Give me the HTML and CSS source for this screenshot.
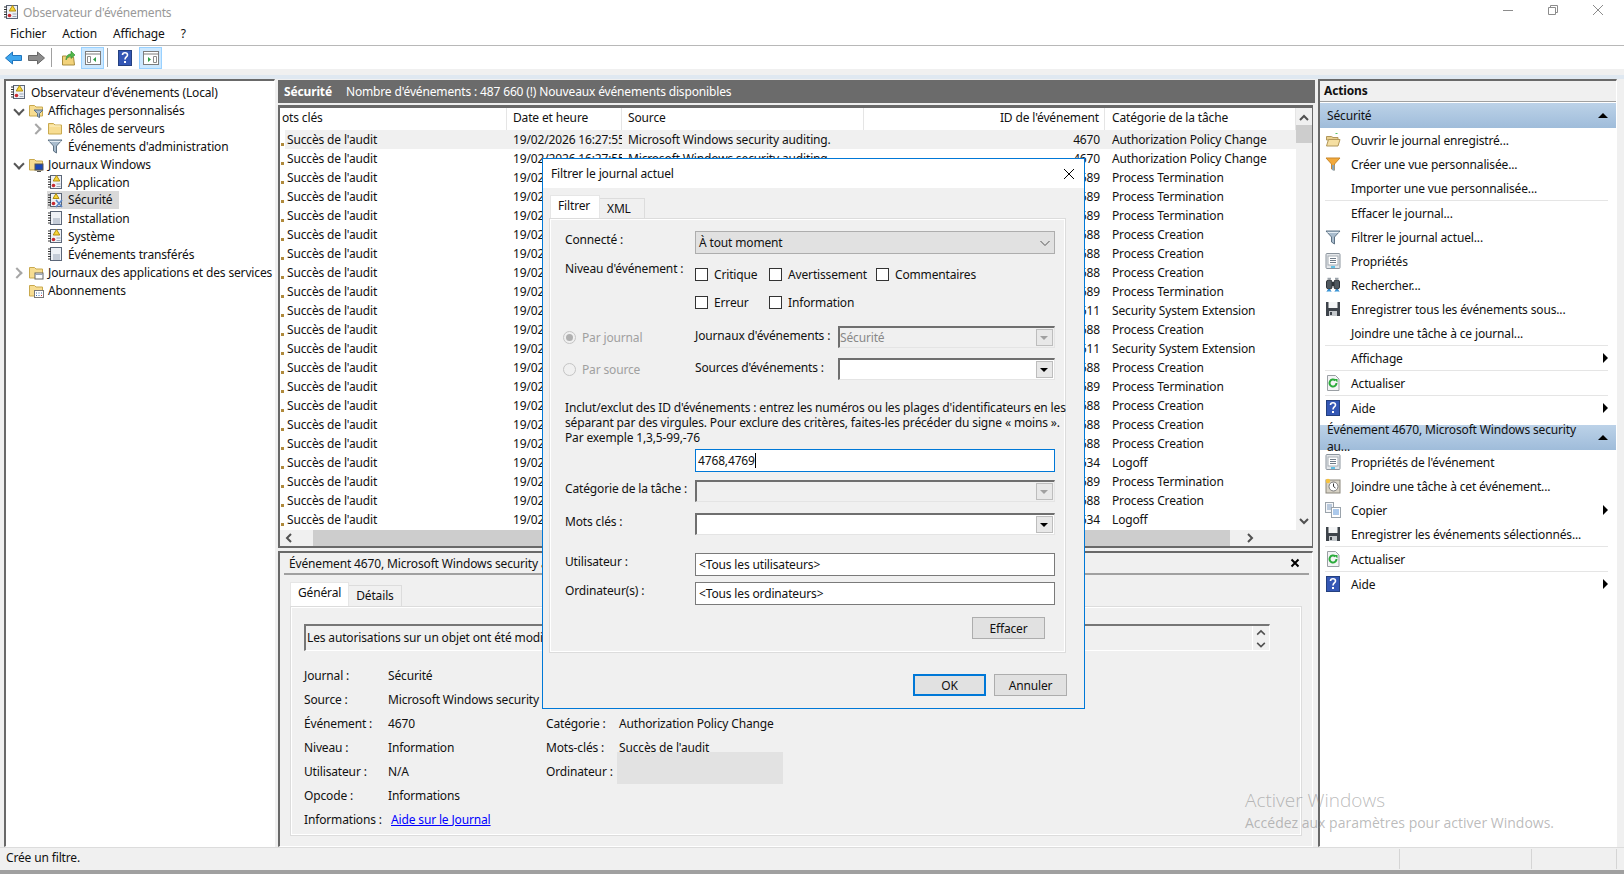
FILE: index.html
```html
<!DOCTYPE html>
<html lang="fr">
<head>
  <meta charset="UTF-8">
  <title>Observateur d'événements</title>
  <link rel="stylesheet" href="styles.css">
</head>
<body>

  <!-- Icon set -->
  <svg class="icon-defs" width="0" height="0">
    <defs>
      <symbol id="i-log" viewBox="0 0 16 16">
        <rect x="3.5" y="1.5" width="11" height="13" fill="#eef1f6" stroke="#5b6678"/>
        <path d="M1 3h3M1 5.5h3M1 8h3M1 10.500h3M1 13h3" stroke="#333"/>
        <path d="M6 9h7M6 11h7M6 13h7" stroke="#9aa6b8"/>
      </symbol>
      <symbol id="i-log-alert" viewBox="0 0 16 16">
        <rect x="3.500" y="1.500" width="11" height="13" fill="#eef1f6" stroke="#5b6678"/>
        <path d="M1 3h3M1 5.500h3M1 8h3M1 10.500h3M1 13h3" stroke="#333"/>
        <path d="M9.500 1.500l3.300 5.500h-6.600z" fill="#f8d636" stroke="#b08d10"/>
        <circle cx="6.500" cy="11.500" r="1.800" fill="#c72b32"/>
        <path d="M9.500 10h4M9.500 12.500h4" stroke="#9aa6b8"/>
      </symbol>
      <symbol id="i-log-key" viewBox="0 0 16 16">
        <rect x="3.500" y="1.500" width="11" height="13" fill="#eef1f6" stroke="#5b6678"/>
        <path d="M1 3h3M1 5.500h3M1 8h3M1 10.500h3M1 13h3" stroke="#333"/>
        <path d="M9 1.500l3 5h-6z" fill="#f8d636" stroke="#b08d10"/>
        <circle cx="6.500" cy="11.500" r="1.800" fill="#c72b32"/>
        <path d="M9 8l6 7M15 8l-6 7" stroke="#5a86c8" stroke-width="1.600"/>
      </symbol>
      <symbol id="i-folder" viewBox="0 0 16 16">
        <path d="M1.500 3.500h5l1.500 1.500h6.500v9h-13z" fill="#f7dd92" stroke="#c9a94e"/>
        <path d="M2.500 6h11" stroke="#fdf2c8"/>
      </symbol>
      <symbol id="i-funnel" viewBox="0 0 16 16">
        <path d="M1 2h14l-5.500 6v7l-3-2v-5z" fill="#a9bccd" stroke="#5e7284"/>
        <path d="M2.500 3.500h11" stroke="#e4edf4"/>
      </symbol>
      <symbol id="i-funnel-orange" viewBox="0 0 16 16">
        <path d="M1 2h14l-5.500 6v6l-3-1v-5z" fill="#f2a93b" stroke="#c9882c"/>
        <path d="M7 9v5l2.500 1v-6z" fill="#8aa4b8"/>
      </symbol>
      <symbol id="i-folder-filter" viewBox="0 0 16 16">
        <path d="M1.500 3.500h5l1.500 1.500h6.500v9h-13z" fill="#f7dd92" stroke="#c9a94e"/>
        <path d="M6 8h9l-3.500 3.500v4l-2-1v-3z" fill="#a9bccd" stroke="#5e7284"/>
      </symbol>
      <symbol id="i-folder-monitor" viewBox="0 0 16 16">
        <path d="M1.500 3.500h5l1.500 1.500h6.500v9h-13z" fill="#f7dd92" stroke="#c9a94e"/>
        <rect x="7" y="8" width="8" height="6" fill="#1b48b8" stroke="#555"/>
        <path d="M9 15.500h4" stroke="#555"/>
      </symbol>
      <symbol id="i-folder-doc" viewBox="0 0 16 16">
        <path d="M1.500 3.500h5l1.500 1.500h6.500v9h-13z" fill="#f7dd92" stroke="#c9a94e"/>
        <rect x="7" y="9" width="8" height="6" fill="#fff" stroke="#666"/>
        <path d="M7 10.500h8" stroke="#9aa6b8"/>
      </symbol>
      <symbol id="i-folder-sub" viewBox="0 0 16 16">
        <path d="M1.500 3.500h5l1.500 1.500h6.500v9h-13z" fill="#f7dd92" stroke="#c9a94e"/>
        <rect x="6.500" y="8.500" width="9" height="7" fill="#fff" stroke="#777"/>
        <path d="M8 11h1M10.500 11h1M13 11h1M8 13.500h1M10.500 13.500h1" stroke="#3a6fb0"/>
        <path d="M13 13.500h1" stroke="#c72b32"/>
      </symbol>
      <symbol id="i-help" viewBox="0 0 16 16">
        <rect x="1.500" y="0.500" width="13" height="15" fill="#3457b5" stroke="#24407f"/>
        <path d="M5.500 5c0-3 5-3 5 0 0 2-2.500 2-2.500 4.500" fill="none" stroke="#fff" stroke-width="1.600"/>
        <rect x="7" y="11" width="2" height="2" fill="#fff"/>
      </symbol>
      <symbol id="i-pane-left" viewBox="0 0 16 16">
        <rect x="0.500" y="1.500" width="15" height="13" fill="#fff" stroke="#7d7d7d"/>
        <path d="M1 4h14" stroke="#7d7d7d"/>
        <path d="M2.500 6.500h3v6h-3z" fill="none" stroke="#8a8a8a"/>
        <path d="M11 7v5l-3-2.500z" fill="#2f9e44"/>
      </symbol>
      <symbol id="i-pane-right" viewBox="0 0 16 16">
        <rect x="0.500" y="1.500" width="15" height="13" fill="#fff" stroke="#7d7d7d"/>
        <path d="M1 4h14" stroke="#7d7d7d"/>
        <path d="M10.500 6.500h3v6h-3z" fill="none" stroke="#8a8a8a"/>
        <path d="M5 7v5l3-2.500z" fill="#2f9e44"/>
      </symbol>
      <symbol id="i-open" viewBox="0 0 16 16">
        <path d="M1.500 4.500h5l1.500 1h5v2.500h-11.500z" fill="#e8cf8e" stroke="#b1975a"/>
        <path d="M1.500 14l2-6.500h11.500l-2 6.500z" fill="#f5dfa2" stroke="#b1975a"/>
        <path d="M10.500 1.500h2" stroke="#55c26a"/>
      </symbol>
      <symbol id="i-props" viewBox="0 0 16 16">
        <rect x="1" y="0.500" width="14" height="15" rx="1" fill="#e4e7ea" stroke="#8c959e"/>
        <rect x="3" y="3" width="10" height="9" fill="#fff" stroke="#a6adb4"/>
        <path d="M5 5.500h6M5 7.500h6M5 9.500h6" stroke="#6f7b88"/>
        <path d="M6 14h4" stroke="#35b5e5" stroke-width="1.500"/>
      </symbol>
      <symbol id="i-find" viewBox="0 0 16 16">
        <rect x="1.500" y="3" width="5.500" height="9" rx="2" fill="#50585f" stroke="#2d3238"/>
        <rect x="9" y="3" width="5.500" height="9" rx="2" fill="#50585f" stroke="#2d3238"/>
        <path d="M7 5h2v4h-2z" fill="#2d3238"/>
        <path d="M2.500 1.500h3.500M10 1.500h3.500" stroke="#9aa3ab" stroke-width="1.500"/>
        <path d="M2 14.500l2-2.500 2 2.500M10 14.500l2-2.500 2 2.500" fill="#3b9fe0" stroke="#2a7fc4"/>
      </symbol>
      <symbol id="i-save" viewBox="0 0 16 16">
        <path d="M1 1h14v14h-14z" fill="#3e444b"/>
        <rect x="3.500" y="1" width="9" height="6" fill="#f4f5f6"/>
        <rect x="4" y="10" width="8" height="5" fill="#c5c9cd"/>
        <rect x="5" y="11" width="2" height="3" fill="#3e444b"/>
      </symbol>
      <symbol id="i-refresh" viewBox="0 0 16 16">
        <path d="M2.500 0.500h8l3.500 3.500v11.500h-11.500z" fill="#f3f4f5" stroke="#9a9fa4"/>
        <path d="M11.500 8a3.500 3.500 0 1 1-1.200-2.600" fill="none" stroke="#2bab3c" stroke-width="2"/>
        <path d="M9 4h3.500v3.500z" fill="#2bab3c"/>
      </symbol>
      <symbol id="i-task" viewBox="0 0 16 16">
        <rect x="1" y="2" width="14" height="13" fill="#d8d3c6" stroke="#8b877c"/>
        <circle cx="8.500" cy="8.500" r="4.500" fill="#fff" stroke="#7b7b7b"/>
        <path d="M8.500 5.500v3l2 1.500" fill="none" stroke="#333"/>
        <circle cx="3" cy="3" r="2.200" fill="#f7c23c"/>
      </symbol>
      <symbol id="i-copy" viewBox="0 0 16 16">
        <rect x="0.500" y="0.500" width="8" height="10" fill="#f6f7f9" stroke="#9aa3ab"/>
        <path d="M2 3h5M2 5h5M2 7h5" stroke="#7f9cc0"/>
        <rect x="6.500" y="5.500" width="9" height="10" fill="#fff" stroke="#9aa3ab"/>
        <path d="M8 8h6M8 10h6M8 12h6" stroke="#5a94d8"/>
      </symbol>
    </defs>
  </svg>

  <div class="window">

    <div class="titlebar">
      <svg class="icon"><use href="#i-log-alert"/></svg>
      <span class="title-text">Observateur d'événements</span>
      <div class="window-buttons">
        <svg width="12" height="12" viewBox="0 0 12 12"><path d="M1 6.500h10" stroke="#8c8c8c"/></svg>
        <svg width="12" height="12" viewBox="0 0 12 12"><path d="M1.500 3.500h7v7h-7zM3.500 3.500v-2h7v7h-2" fill="none" stroke="#8c8c8c"/></svg>
        <svg width="12" height="12" viewBox="0 0 12 12"><path d="M1 1l10 10M11 1l-10 10" stroke="#8c8c8c"/></svg>
      </div>
    </div>

    <div class="menubar">
      <span>Fichier</span>
      <span>Action</span>
      <span>Affichage</span>
      <span>?</span>
    </div>

    <div class="toolbar">
      <svg class="tool-arrow" width="17" height="16" viewBox="0 0 17 16"><path d="M0.500 8l7-6v3.500h9v5h-9v3.500z" fill="#3ea6ee" stroke="#1f74bd"/></svg>
      <svg class="tool-arrow" width="17" height="16" viewBox="0 0 17 16"><path d="M16.500 8l-7-6v3.500h-9v5h9v3.500z" fill="#8d8d8d" stroke="#666"/></svg>
      <span class="tool-sep"></span>
      <svg class="tool-icon" width="16" height="16" viewBox="0 0 16 16"><path d="M1.500 6h4l1 1h6l1 8h-12z" fill="#f2d27a" stroke="#a88c3c"/><path d="M5 10c0-4 2-6 5-6v-3l4 4-4 3.500v-2.500c-2 0-3.500 1.500-5 4z" fill="#52b84a" stroke="#2f8a33" stroke-width=".6"/></svg>
      <span class="tool-toggle"><svg class="icon"><use href="#i-pane-left"/></svg></span>
      <span class="tool-sep tool-sep-tight"></span>
      <svg class="tool-icon"  width="16" height="16"><use href="#i-help"/></svg>
      <span class="tool-toggle tool-toggle-last"><svg class="icon"><use href="#i-pane-right"/></svg></span>
    </div>

    <div class="workspace">

      <!-- Console tree -->
      <div class="pane tree">
        <div class="tree-row"><span class="twisty"></span><svg class="icon"><use href="#i-log-alert"/></svg><span>Observateur d'événements (Local)</span></div>
        <div class="tree-row lvl1"><span class="twisty open"></span><svg class="icon"><use href="#i-folder-filter"/></svg><span>Affichages personnalisés</span></div>
        <div class="tree-row lvl2"><span class="twisty closed"></span><svg class="icon"><use href="#i-folder"/></svg><span>Rôles de serveurs</span></div>
        <div class="tree-row lvl2"><span class="twisty"></span><svg class="icon"><use href="#i-funnel"/></svg><span>Événements d'administration</span></div>
        <div class="tree-row lvl1"><span class="twisty open"></span><svg class="icon"><use href="#i-folder-monitor"/></svg><span>Journaux Windows</span></div>
        <div class="tree-row lvl2"><span class="twisty"></span><svg class="icon"><use href="#i-log-alert"/></svg><span>Application</span></div>
        <div class="tree-row lvl2 selected"><span class="twisty"></span><svg class="icon"><use href="#i-log-key"/></svg><span>Sécurité</span></div>
        <div class="tree-row lvl2"><span class="twisty"></span><svg class="icon"><use href="#i-log"/></svg><span>Installation</span></div>
        <div class="tree-row lvl2"><span class="twisty"></span><svg class="icon"><use href="#i-log-alert"/></svg><span>Système</span></div>
        <div class="tree-row lvl2"><span class="twisty"></span><svg class="icon"><use href="#i-log"/></svg><span>Événements transférés</span></div>
        <div class="tree-row lvl1"><span class="twisty closed"></span><svg class="icon"><use href="#i-folder-doc"/></svg><span>Journaux des applications et des services</span></div>
        <div class="tree-row lvl1"><span class="twisty"></span><svg class="icon"><use href="#i-folder-sub"/></svg><span>Abonnements</span></div>
      </div>

      <!-- Center -->
      <div class="center">
        <div class="center-head"><b>Sécurité</b><span>Nombre d'événements : 487 660 (!) Nouveaux événements disponibles</span></div>

        <div class="pane list-pane">
          <div class="list-main">
            <div class="list-cols">
              <div class="list-head">
                <div class="c-key"><span class="clip-start">ots clés</span></div>
                <div class="c-date">Date et heure</div>
                <div class="c-src">Source</div>
                <div class="c-id">ID de l'événement</div>
                <div class="c-cat">Catégorie de la tâche</div>
              </div>
              <div class="list-rows">
                <div class="row current"><div class="c-key">Succès de l'audit</div><div class="c-date">19/02/2026 16:27:55</div><div class="c-src">Microsoft Windows security auditing.</div><div class="c-id">4670</div><div class="c-cat">Authorization Policy Change</div></div>
                <div class="row"><div class="c-key">Succès de l'audit</div><div class="c-date">19/02/2026 16:27:55</div><div class="c-src">Microsoft Windows security auditing.</div><div class="c-id">4670</div><div class="c-cat">Authorization Policy Change</div></div>
                <div class="row"><div class="c-key">Succès de l'audit</div><div class="c-date">19/02/2026 16:27:55</div><div class="c-src">Microsoft Windows security auditing.</div><div class="c-id">4689</div><div class="c-cat">Process Termination</div></div>
                <div class="row"><div class="c-key">Succès de l'audit</div><div class="c-date">19/02/2026 16:27:55</div><div class="c-src">Microsoft Windows security auditing.</div><div class="c-id">4689</div><div class="c-cat">Process Termination</div></div>
                <div class="row"><div class="c-key">Succès de l'audit</div><div class="c-date">19/02/2026 16:27:55</div><div class="c-src">Microsoft Windows security auditing.</div><div class="c-id">4689</div><div class="c-cat">Process Termination</div></div>
                <div class="row"><div class="c-key">Succès de l'audit</div><div class="c-date">19/02/2026 16:27:55</div><div class="c-src">Microsoft Windows security auditing.</div><div class="c-id">4688</div><div class="c-cat">Process Creation</div></div>
                <div class="row"><div class="c-key">Succès de l'audit</div><div class="c-date">19/02/2026 16:27:55</div><div class="c-src">Microsoft Windows security auditing.</div><div class="c-id">4688</div><div class="c-cat">Process Creation</div></div>
                <div class="row"><div class="c-key">Succès de l'audit</div><div class="c-date">19/02/2026 16:27:55</div><div class="c-src">Microsoft Windows security auditing.</div><div class="c-id">4688</div><div class="c-cat">Process Creation</div></div>
                <div class="row"><div class="c-key">Succès de l'audit</div><div class="c-date">19/02/2026 16:27:55</div><div class="c-src">Microsoft Windows security auditing.</div><div class="c-id">4689</div><div class="c-cat">Process Termination</div></div>
                <div class="row"><div class="c-key">Succès de l'audit</div><div class="c-date">19/02/2026 16:27:55</div><div class="c-src">Microsoft Windows security auditing.</div><div class="c-id">4611</div><div class="c-cat">Security System Extension</div></div>
                <div class="row"><div class="c-key">Succès de l'audit</div><div class="c-date">19/02/2026 16:27:55</div><div class="c-src">Microsoft Windows security auditing.</div><div class="c-id">4688</div><div class="c-cat">Process Creation</div></div>
                <div class="row"><div class="c-key">Succès de l'audit</div><div class="c-date">19/02/2026 16:27:55</div><div class="c-src">Microsoft Windows security auditing.</div><div class="c-id">4611</div><div class="c-cat">Security System Extension</div></div>
                <div class="row"><div class="c-key">Succès de l'audit</div><div class="c-date">19/02/2026 16:27:55</div><div class="c-src">Microsoft Windows security auditing.</div><div class="c-id">4688</div><div class="c-cat">Process Creation</div></div>
                <div class="row"><div class="c-key">Succès de l'audit</div><div class="c-date">19/02/2026 16:27:55</div><div class="c-src">Microsoft Windows security auditing.</div><div class="c-id">4689</div><div class="c-cat">Process Termination</div></div>
                <div class="row"><div class="c-key">Succès de l'audit</div><div class="c-date">19/02/2026 16:27:55</div><div class="c-src">Microsoft Windows security auditing.</div><div class="c-id">4688</div><div class="c-cat">Process Creation</div></div>
                <div class="row"><div class="c-key">Succès de l'audit</div><div class="c-date">19/02/2026 16:27:55</div><div class="c-src">Microsoft Windows security auditing.</div><div class="c-id">4688</div><div class="c-cat">Process Creation</div></div>
                <div class="row"><div class="c-key">Succès de l'audit</div><div class="c-date">19/02/2026 16:27:55</div><div class="c-src">Microsoft Windows security auditing.</div><div class="c-id">4688</div><div class="c-cat">Process Creation</div></div>
                <div class="row"><div class="c-key">Succès de l'audit</div><div class="c-date">19/02/2026 16:27:55</div><div class="c-src">Microsoft Windows security auditing.</div><div class="c-id">4634</div><div class="c-cat">Logoff</div></div>
                <div class="row"><div class="c-key">Succès de l'audit</div><div class="c-date">19/02/2026 16:27:55</div><div class="c-src">Microsoft Windows security auditing.</div><div class="c-id">4689</div><div class="c-cat">Process Termination</div></div>
                <div class="row"><div class="c-key">Succès de l'audit</div><div class="c-date">19/02/2026 16:27:55</div><div class="c-src">Microsoft Windows security auditing.</div><div class="c-id">4688</div><div class="c-cat">Process Creation</div></div>
                <div class="row"><div class="c-key">Succès de l'audit</div><div class="c-date">19/02/2026 16:27:55</div><div class="c-src">Microsoft Windows security auditing.</div><div class="c-id">4634</div><div class="c-cat">Logoff</div></div>
              </div>
            </div>
            <div class="vscroll">
              <svg width="16" height="16" viewBox="0 0 16 16"><path d="M4 10l4-4 4 4" fill="none" stroke="#505050" stroke-width="2"/></svg>
              <span class="vthumb"></span>
              <svg width="16" height="16" viewBox="0 0 16 16"><path d="M4 6l4 4 4-4" fill="none" stroke="#505050" stroke-width="2"/></svg>
            </div>
          </div>
          <div class="hscroll">
            <svg class="harrow" width="16" height="16" viewBox="0 0 16 16"><path d="M10 4l-4 4 4 4" fill="none" stroke="#505050" stroke-width="2"/></svg>
            <span class="hthumb"></span>
            <svg class="harrow-end" width="16" height="16" viewBox="0 0 16 16"><path d="M6 4l4 4-4 4" fill="none" stroke="#505050" stroke-width="2"/></svg>
          </div>
        </div>

        <!-- Event preview -->
        <div class="pane detail-pane">
          <div class="detail-head">
            <span>Événement 4670, Microsoft Windows security auditing.</span>
            <svg width="10" height="10" viewBox="0 0 10 10"><path d="M1.500 1.500l7 7M8.500 1.500l-7 7" stroke="#000" stroke-width="2"/></svg>
          </div>
          <div class="tabs detail-tabs">
            <span class="tab active">Général</span>
            <span class="tab">Détails</span>
          </div>
          <div class="tab-panel detail-panel">
            <div class="message">
              <span>Les autorisations sur un objet ont été modifiées.</span>
              <div class="message-scroll">
                <svg width="12" height="12" viewBox="0 0 12 12"><path d="M2 8l4-4 4 4" fill="none" stroke="#505050" stroke-width="1.600"/></svg>
                <svg width="12" height="12" viewBox="0 0 12 12"><path d="M2 4l4 4 4-4" fill="none" stroke="#505050" stroke-width="1.600"/></svg>
              </div>
            </div>
            <div class="fields">
              <span>Journal :</span><span>Sécurité</span><span></span><span></span>
              <span>Source :</span><span>Microsoft Windows security auditing.</span><span></span><span></span>
              <span>Événement :</span><span>4670</span><span>Catégorie :</span><span>Authorization Policy Change</span>
              <span>Niveau :</span><span>Information</span><span>Mots-clés :</span><span>Succès de l'audit</span>
              <span>Utilisateur :</span><span>N/A</span><span>Ordinateur :</span><span></span>
              <span>Opcode :</span><span>Informations</span><span></span><span></span>
              <span>Informations :</span><a class="help-link" href="#">Aide sur le Journal</a><span></span><span></span>
            </div>
            <div class="redacted"></div>
          </div>
        </div>
      </div>

      <!-- Actions -->
      <div class="pane actions">
        <div class="actions-head">Actions</div>
        <div class="section-head"><span>Sécurité</span><i class="tri-up"></i></div>
        <div class="action"><svg class="icon"><use href="#i-open"/></svg><span>Ouvrir le journal enregistré...</span></div>
        <div class="action"><svg class="icon"><use href="#i-funnel-orange"/></svg><span>Créer une vue personnalisée...</span></div>
        <div class="action"><span class="icon"></span><span>Importer une vue personnalisée...</span></div>
        <div class="action-sep"></div>
        <div class="action"><span class="icon"></span><span>Effacer le journal...</span></div>
        <div class="action"><svg class="icon"><use href="#i-funnel"/></svg><span>Filtrer le journal actuel...</span></div>
        <div class="action"><svg class="icon"><use href="#i-props"/></svg><span>Propriétés</span></div>
        <div class="action"><svg class="icon"><use href="#i-find"/></svg><span>Rechercher...</span></div>
        <div class="action"><svg class="icon"><use href="#i-save"/></svg><span>Enregistrer tous les événements sous...</span></div>
        <div class="action"><span class="icon"></span><span>Joindre une tâche à ce journal...</span></div>
        <div class="action-sep"></div>
        <div class="action"><span class="icon"></span><span>Affichage</span><i class="tri-right"></i></div>
        <div class="action-sep"></div>
        <div class="action"><svg class="icon"><use href="#i-refresh"/></svg><span>Actualiser</span></div>
        <div class="action-sep"></div>
        <div class="action"><svg class="icon"><use href="#i-help"/></svg><span>Aide</span><i class="tri-right"></i></div>
        <div class="section-head section-gap"><span>Événement 4670, Microsoft Windows security au...</span><i class="tri-up"></i></div>
        <div class="action"><svg class="icon"><use href="#i-props"/></svg><span>Propriétés de l'événement</span></div>
        <div class="action"><svg class="icon"><use href="#i-task"/></svg><span>Joindre une tâche à cet événement...</span></div>
        <div class="action"><svg class="icon"><use href="#i-copy"/></svg><span>Copier</span><i class="tri-right"></i></div>
        <div class="action"><svg class="icon"><use href="#i-save"/></svg><span>Enregistrer les événements sélectionnés...</span></div>
        <div class="action-sep"></div>
        <div class="action"><svg class="icon"><use href="#i-refresh"/></svg><span>Actualiser</span></div>
        <div class="action-sep"></div>
        <div class="action"><svg class="icon"><use href="#i-help"/></svg><span>Aide</span><i class="tri-right"></i></div>
      </div>
    </div>

    <div class="statusbar">
      <span class="status-main">Crée un filtre.</span>
      <span class="status-cell status-a"></span>
      <span class="status-cell status-b"></span>
    </div>
  </div>

  <!-- Filter dialog -->
  <div class="dialog">
    <div class="dialog-title">
      <span>Filtrer le journal actuel</span>
      <svg width="12" height="12" viewBox="0 0 12 12"><path d="M1 1l10 10M11 1l-10 10" stroke="#000"/></svg>
    </div>
    <div class="dialog-body">
      <div class="tabs dialog-tabs">
        <span class="tab active">Filtrer</span>
        <span class="tab">XML</span>
      </div>
      <div class="tab-panel filter-panel">
        <div class="f-row f-connect">
          <label class="f-label">Connecté :</label>
          <div class="select"><span>À tout moment</span><svg width="12" height="12" viewBox="0 0 12 12"><path d="M1.500 4l4.500 4.500 4.500-4.500" fill="none" stroke="#555"/></svg></div>
        </div>
        <div class="f-row f-levels">
          <label class="f-label">Niveau d'événement :</label>
          <div class="levels">
            <label class="check"><input type="checkbox">Critique</label>
            <label class="check"><input type="checkbox">Avertissement</label>
            <label class="check"><input type="checkbox">Commentaires</label>
            <label class="check"><input type="checkbox">Erreur</label>
            <label class="check"><input type="checkbox">Information</label>
          </div>
        </div>
        <div class="f-row f-source">
          <label class="radio off"><span class="radio-dot on"></span>Par journal</label>
          <label class="f-sub">Journaux d'événements :</label>
          <div class="combo disabled"><span>Sécurité</span><i class="combo-btn"></i></div>
        </div>
        <div class="f-row f-source f-source2">
          <label class="radio off"><span class="radio-dot"></span>Par source</label>
          <label class="f-sub">Sources d'événements :</label>
          <div class="combo"><span></span><i class="combo-btn"></i></div>
        </div>
        <p class="f-help">Inclut/exclut des ID d'événements : entrez les numéros ou les plages d'identificateurs en les<br>séparant par des virgules. Pour exclure des critères, faites-les précéder du signe « moins ».<br>Par exemple 1,3,5-99,-76</p>
        <div class="f-row f-ids">
          <span class="f-label"></span>
          <div class="field focused"><span>4768,4769</span><i class="caret"></i></div>
        </div>
        <div class="f-row f-cat">
          <label class="f-label">Catégorie de la tâche :</label>
          <div class="combo wide disabled"><span></span><i class="combo-btn"></i></div>
        </div>
        <div class="f-row f-keys">
          <label class="f-label">Mots clés :</label>
          <div class="combo wide"><span></span><i class="combo-btn"></i></div>
        </div>
        <div class="f-row f-user">
          <label class="f-label">Utilisateur :</label>
          <div class="field"><span>&lt;Tous les utilisateurs&gt;</span></div>
        </div>
        <div class="f-row f-comp">
          <label class="f-label">Ordinateur(s) :</label>
          <div class="field"><span>&lt;Tous les ordinateurs&gt;</span></div>
        </div>
        <div class="f-clear"><button class="btn">Effacer</button></div>
      </div>
      <div class="dialog-buttons">
        <button class="btn default">OK</button>
        <button class="btn">Annuler</button>
      </div>
    </div>
  </div>

  <div class="watermark">
    <div class="wm-big">Activer Windows</div>
    <div class="wm-small">Accédez aux paramètres pour activer Windows.</div>
  </div>

</body>
</html>
```

FILE: styles.css
```css
* {
  box-sizing: border-box;
}

html, body {
  margin: 0;
  height: 874px;
  overflow: hidden;
}

body {
  font-family: "Noto Sans", "Open Sans", sans-serif;
  font-size: 12px;
  letter-spacing: -0.15px;
  color: #111;
  background-color: #f0f0f0;
}

.icon-defs {
  position: absolute;
}

.icon {
  display: inline-block;
  width: 16px;
  height: 16px;
  flex: none;
}

.window {
  width: 1624px;
  height: 874px;
  display: flex;
  flex-direction: column;
  border-bottom: 4px solid #a0a0a0;
}

/* Title, menu, toolbar */
.titlebar {
  height: 24px;
  background: #fff;
  display: flex;
  align-items: center;
  padding-left: 3px;
}

.title-text {
  margin-left: 4px;
  color: #999;
}

.window-buttons {
  margin-left: auto;
  margin-right: 20px;
  display: flex;
  gap: 33px;
  margin-top: -4px;
}

.menubar {
  height: 22px;
  background: #fff;
  display: flex;
  align-items: center;
  gap: 16px;
  padding: 0 0 2px 10px;
  border-bottom: 1px solid #b8b8b8;
  font-size: 12px;
}

.toolbar {
  height: 23px;
  background: #fff;
  display: flex;
  align-items: center;
  padding-left: 5px;
  flex: none;
}

.tool-arrow {
  margin-right: 6px;
}

.tool-sep {
  width: 1px;
  height: 19px;
  background: #a0a0a0;
  margin: 0 9px 0 0;
}

.tool-sep-tight {
  margin: 0 9px 0 3px;
}

.tool-toggle {
  width: 23px;
  height: 22px;
  background: #cce8ff;
  border: 1px solid #99d1ff;
  display: flex;
  align-items: center;
  justify-content: center;
  margin-left: 4px;
}

.tool-toggle-last {
  margin-left: 6px;
}

.workspace {
  flex: 1;
  min-height: 0;
  display: grid;
  grid-template-columns: 271px 1037px 299px;
  column-gap: 3px;
  padding: 10px 4px 0;
  background: linear-gradient(#f0f0f0 6px, #dfe8f1 6px, #dfe8f1 10px, #f0f0f0 10px);
}

.pane {
  border: 1px solid #fff;
  border-top: 2px solid #696969;
  border-left: 2px solid #696969;
  background: #fff;
  min-height: 0;
}

/* Tree */
.tree {
  padding-top: 2px;
}

.tree-row {
  height: 18px;
  display: flex;
  align-items: center;
  padding-left: 4px;
  white-space: nowrap;
}

.tree-row .icon {
  margin-right: 5px;
}

.tree-row.lvl1 {
  padding-left: 4px;
}

.tree-row.lvl1 .twisty {
  width: 18px;
}

.tree-row.lvl2 {
  padding-left: 23px;
}

.tree-row.lvl1 .icon {
  margin-right: 4px;
}

.tree-row:first-child .twisty {
  width: 0;
}

.twisty {
  width: 18px;
  height: 18px;
  flex: none;
  position: relative;
}

.twisty.open::after,
.twisty.closed::after {
  content: "";
  position: absolute;
  left: 5px;
  top: 5px;
  width: 6px;
  height: 6px;
  border-right: 2px solid #555;
  border-bottom: 2px solid #555;
  transform: rotate(45deg);
}

.twisty.closed::after {
  left: 3px;
  top: 6px;
  border-color: #a6a6a6;
  transform: rotate(-45deg);
}

.tree-row.selected span:last-child {
  background: #d9d9d9;
  height: 18px;
  line-height: 17px;
  padding-right: 7px;
  margin-left: -21px;
  padding-left: 21px;
}

.tree-row.selected .icon {
  position: relative;
  z-index: 1;
}

/* Center column */
.center {
  display: flex;
  flex-direction: column;
  min-height: 0;
}

.center-head {
  height: 23px;
  background: #6b6b6b;
  color: #fff;
  display: flex;
  align-items: center;
  gap: 14px;
  padding-left: 6px;
  margin-top: 1px;
  flex: none;
}

.list-pane {
  height: 443px;
  margin-top: 2px;
  display: flex;
  flex-direction: column;
  width: 1035px;
  border-top-width: 3px;
  border-right: 1px solid #696969;
  border-bottom: 2px solid #696969;
  flex: none;
}

.list-main {
  flex: 1;
  min-height: 0;
  display: flex;
}

.list-cols {
  width: 1016px;
  overflow: hidden;
}

.list-head,
.row {
  display: flex;
  white-space: nowrap;
}

.list-head {
  height: 22px;
  align-items: center;
}

.list-head > div {
  height: 22px;
  line-height: 20px;
  border-right: 1px solid #e5e5e5;
}

.list-rows {
  height: 398px;
  overflow: hidden;
}

.row {
  height: 19px;
  line-height: 19px;
  position: relative;
}

.row .c-key::before {
  content: "";
  position: absolute;
  left: 1px;
  top: 13px;
  width: 3px;
  height: 3px;
  background: #b08a3c;
}

.row.current {
  background: linear-gradient(90deg, #fff 5px, #f0f0f0 5px);
}

.c-key {
  width: 227px;
  padding-left: 7px;
  overflow: hidden;
}

.clip-start {
  margin-left: -5px;
}

.c-date {
  width: 115px;
  padding-left: 6px;
  overflow: hidden;
}

.c-src {
  width: 242px;
  padding-left: 6px;
  overflow: hidden;
}

.c-id {
  width: 241px;
  padding-right: 5px;
  text-align: right;
}

.c-cat {
  flex: 1;
  padding-left: 7px;
}

.vscroll {
  width: 16px;
  background: #f0f0f0;
  display: flex;
  flex-direction: column;
  align-items: center;
  padding-top: 2px;
}

.vthumb {
  width: 16px;
  height: 18px;
  background: #cdcdcd;
  margin-top: -1px;
  margin-bottom: auto;
}

.vscroll svg:last-child {
  margin-bottom: 1px;
}

.hscroll {
  height: 16px;
  background: #f0f0f0;
  display: flex;
  align-items: center;
  flex: none;
}

.harrow {
  margin-left: 1px;
  margin-right: 16px;
}

.hthumb {
  width: 917px;
  height: 16px;
  background: #cdcdcd;
}

.harrow-end {
  margin-left: auto;
  margin-right: 57px;
  margin-right: 54px;
}

.detail-pane {
  margin-top: 3px;
  flex: 1;
  width: 1035px;
  background: #f0f0f0;
  padding: 0 3px 0 0;
  border-bottom: 1px solid #fff;
  position: relative;
}

.detail-head {
  height: 22px;
  display: flex;
  align-items: center;
  justify-content: space-between;
  padding: 0 9px 0 5px;
  margin-left: 2px;
  background: #f0f0f0;
  border-bottom: 2px solid #a0a0a0;
  margin-left: 4px;
}

/* Tabs shared by preview and dialog */
.tabs {
  display: flex;
  align-items: flex-end;
}

.tab {
  height: 21px;
  line-height: 19px;
  border: 1px solid #dcdcdc;
  border-bottom: 0;
  border-left: 0;
  padding: 0 7px;
  background: #f0f0f0;
}

.tab.active {
  height: 24px;
  line-height: 19px;
  background: #fff;
  border: 1px solid #e6e6e6;
  border-bottom: 0;
  padding: 0 7px;
}

.detail-tabs {
  margin: 7px 0 0 10px;
  position: relative;
}

.tab-panel {
  border: 1px solid #dcdcdc;
  box-shadow: inset 0 0 0 1px #fff;
  background: #f0f0f0;
  position: relative;
}

.detail-panel {
  margin-left: 10px;
  width: 1012px;
  height: 230px;
  padding: 17px 0 0 13px;
}

.message {
  width: 966px;
  height: 27px;
  border-top: 2px solid #767676;
  border-left: 2px solid #767676;
  border-right: 1px solid #fff;
  border-bottom: 1px solid #fff;
  display: flex;
  padding: 3px 0 0 1px;
}

.message-scroll {
  margin-left: auto;
  width: 17px;
  margin-top: -3px;
  border-left: 1px solid #fff;
  display: flex;
  flex-direction: column;
  align-items: center;
  padding-top: 1px;
}

.fields {
  display: grid;
  grid-template-columns: 84px 158px 73px 1fr;
  grid-auto-rows: 24px;
  align-items: center;
  margin-top: 12px;
  white-space: nowrap;
}

.fields span {
  min-width: 0;
}

.help-link {
  color: #00f;
  margin-left: 3px;
}

.redacted {
  position: absolute;
  left: 326px;
  top: 145px;
  width: 166px;
  height: 32px;
  background: #e2e2e2;
}

/* Actions */
.actions {
  padding-top: 0;
  position: relative;
}

.actions-head {
  height: 21px;
  line-height: 19px;
  background: #f0f0f0;
  font-weight: 700;
  padding-left: 4px;
  border-bottom: 1px solid #a0a0a0;
}

.section-head {
  height: 25px;
  margin-top: 1px;
  background: linear-gradient(#bcd2e8, #9fbcda);
  display: flex;
  align-items: center;
  justify-content: space-between;
  padding: 0 8px 0 7px;
}

.section-gap {
  margin-top: 5px;
}

.tri-up {
  width: 0;
  height: 0;
  border-left: 5px solid transparent;
  border-right: 5px solid transparent;
  border-bottom: 5px solid #000;
}

.tri-right {
  width: 0;
  height: 0;
  margin-left: auto;
  margin-right: 8px;
  border-top: 5px solid transparent;
  border-bottom: 5px solid transparent;
  border-left: 5px solid #000;
}

.action {
  height: 24px;
  display: flex;
  align-items: center;
  padding-left: 5px;
  white-space: nowrap;
}

.action .icon {
  margin-right: 10px;
}

.action-sep {
  height: 1px;
  margin: 0 8px 0 5px;
  background: #e5e5e5;
}

/* Status */
.statusbar {
  height: 23px;
  display: flex;
  background: #f0f0f0;
  border-top: 1px solid #dcdcdc;
  align-items: center;
  flex: none;
}

.status-main {
  width: 1400px;
  padding-left: 6px;
  border-right: 1px solid #d5d5d5;
  height: 20px;
  line-height: 18px;
}

.status-cell {
  height: 20px;
  border-right: 1px solid #d5d5d5;
}

.status-a {
  width: 132px;
}

.status-b {
  width: 85px;
}

/* Dialog */
.dialog {
  position: absolute;
  left: 542px;
  top: 158px;
  width: 543px;
  height: 551px;
  background: #f0f0f0;
  border: 1px solid #0078d7;
  display: flex;
  flex-direction: column;
}

.dialog-title {
  height: 29px;
  background: #fff;
  display: flex;
  align-items: center;
  justify-content: space-between;
  padding: 0 9px 0 8px;
  flex: none;
}

.dialog-tabs {
  margin: 7px 0 0 7px;
}

.dialog-tabs .tab.active {
  height: 23px;
  width: 50px;
}

.dialog-tabs .tab {
  height: 20px;
  width: 45px;
}

.filter-panel {
  margin-left: 6px;
  width: 517px;
  height: 435px;
  padding: 12px 10px 0 15px;
}

.f-row {
  display: flex;
  position: relative;
}

.f-label {
  width: 130px;
  flex: none;
  white-space: nowrap;
}

.f-connect {
  height: 23px;
  padding-top: 0;
}

.select {
  width: 361px;
  height: 23px;
  background: #e1e1e1;
  border: 1px solid #adadad;
  display: flex;
  align-items: center;
  justify-content: space-between;
  padding: 0 3px 0 3px;
}

.f-levels {
  margin-top: 6px;
}

.levels {
  display: grid;
  grid-template-columns: 74px 107px auto;
  grid-auto-rows: 28px;
  margin-top: 4px;
  justify-content: start;
  align-content: start;
}

.check {
  display: flex;
  align-items: center;
  gap: 6px;
  white-space: nowrap;
  height: 28px;
  margin-top: -4px;
}

.check input {
  appearance: none;
  width: 13px;
  height: 13px;
  margin: 0;
  background: #fff;
  border: 1px solid #333;
  flex: none;
}

.f-source {
  margin-top: 6px;
  height: 22px;
  align-items: center;
}

.f-source2 {
  margin-top: 10px;
}

.radio {
  width: 130px;
  flex: none;
  display: flex;
  align-items: center;
  gap: 6px;
  color: #a0a0a0;
}

.radio-dot {
  width: 13px;
  height: 13px;
  border-radius: 50%;
  border: 1px solid #c4c4c4;
  background: #f0f0f0;
  position: relative;
  flex: none;
  margin-left: -2px;
}

.radio-dot.on::after {
  content: "";
  position: absolute;
  left: 2px;
  top: 2px;
  width: 7px;
  height: 7px;
  border-radius: 50%;
  background: #b0b0b0;
}

.f-sub {
  width: 143px;
  flex: none;
  white-space: nowrap;
  padding-bottom: 3px;
}

.combo {
  width: 217px;
  height: 22px;
  background: #fff;
  border-top: 2px solid #6f6f6f;
  border-left: 2px solid #6f6f6f;
  border-right: 1px solid #e4e4e4;
  border-bottom: 1px solid #e4e4e4;
  display: flex;
  align-items: center;
  justify-content: space-between;
}

.combo.wide {
  width: 361px;
}

.combo.disabled {
  background: #f0f0f0;
  color: #888;
}

.combo-btn {
  width: 17px;
  height: 17px;
  background: #e8e8e8;
  border: 1px solid #bdbdbd;
  position: relative;
  margin-right: 1px;
}

.combo-btn::after {
  content: "";
  position: absolute;
  left: 3px;
  top: 6px;
  border-left: 4px solid transparent;
  border-right: 4px solid transparent;
  border-top: 4px solid #000;
}

.combo.disabled .combo-btn::after {
  border-top-color: #a0a0a0;
}

.f-help {
  margin: 20px 0 0;
  line-height: 15px;
  width: 490px;
  white-space: nowrap;
}

.f-ids {
  margin-top: 4px;
}

.field {
  width: 361px;
  height: 23px;
  background: #fff;
  border: 1px solid #7a7a7a;
  display: flex;
  align-items: center;
  padding-left: 3px;
}

.field.focused {
  border-color: #0078d7;
  padding-left: 2px;
}

.caret {
  width: 1px;
  height: 15px;
  background: #000;
  margin-left: 0;
}

.f-cat {
  margin-top: 8px;
}

.f-keys {
  margin-top: 11px;
}

.f-user {
  margin-top: 18px;
}

.f-comp {
  margin-top: 6px;
}

.f-cat .f-label,
.f-keys .f-label,
.f-user .f-label,
.f-comp .f-label {
  padding-top: 0;
}

.f-clear {
  display: flex;
  justify-content: flex-end;
  padding-right: 10px;
  margin-top: 12px;
}

.btn {
  width: 73px;
  height: 22px;
  padding: 0;
  font: inherit;
  letter-spacing: inherit;
  color: #111;
  background: #e1e1e1;
  border: 1px solid #adadad;
}

.btn.default {
  border: 2px solid #0078d7;
}

.dialog-buttons {
  display: flex;
  justify-content: flex-end;
  gap: 8px;
  padding-right: 17px;
  margin-top: 21px;
}

/* Activation notice */
.watermark {
  position: absolute;
  left: 1245px;
  top: 787px;
  color: rgba(130, 130, 130, 0.55);
  font-family: "Open Sans", sans-serif;
  letter-spacing: 0;
  white-space: nowrap;
  pointer-events: none;
}

.wm-big {
  font-size: 19px;
  font-weight: 300;
  line-height: 26px;
}

.wm-small {
  font-size: 14px;
  line-height: 20px;
}
```
